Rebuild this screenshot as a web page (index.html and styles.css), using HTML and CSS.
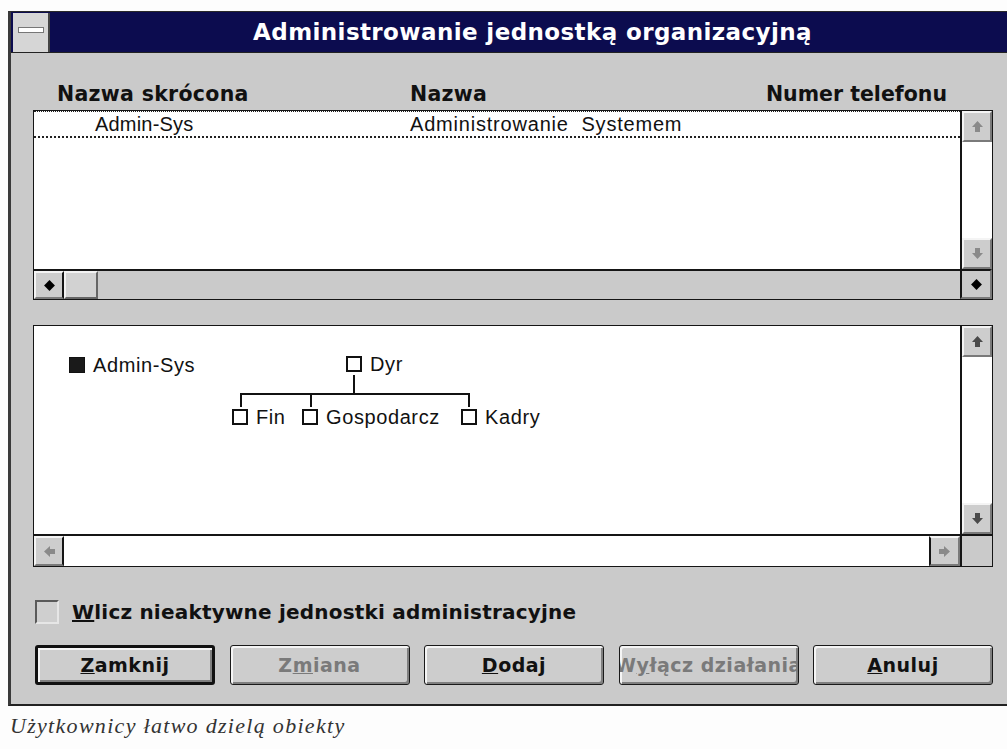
FILE: index.html
```html
<!DOCTYPE html>
<html lang="pl">
<head>
<meta charset="utf-8">
<title>Administrowanie jednostką organizacyjną</title>
<link rel="stylesheet" href="styles.css">
</head>
<body>
<div class="window">
  <div class="titlebar">
    <div class="sysmenu"><span class="sysbar"></span></div>
    <div class="title">Administrowanie jednostką organizacyjną</div>
  </div>
  <div class="client">
    <div class="headers">
      <span class="h-short">Nazwa skrócona</span>
      <span class="h-name">Nazwa</span>
      <span class="h-phone">Numer telefonu</span>
    </div>

    <div class="box box-list">
      <div class="pane">
        <div class="row focused">
          <span class="c-short">Admin-Sys</span>
          <span class="c-name">Administrowanie&nbsp; Systemem</span>
        </div>
      </div>
      <div class="vscroll">
        <div class="sbtn"><svg viewBox="0 0 13 13"><polygon points="6.5,1 12,7 9,7 9,12 4,12 4,7 1,7" class="arr-off"/></svg></div>
        <div class="track"></div>
        <div class="sbtn"><svg viewBox="0 0 13 13"><polygon points="6.5,12 12,6 9,6 9,1 4,1 4,6 1,6" class="arr-off"/></svg></div>
      </div>
      <div class="hscroll grey">
        <div class="sbtn wide"><svg viewBox="0 0 12 12"><polygon points="6,1 11,6 6,11 1,6" class="dia"/></svg></div>
        <div class="thumb"></div>
        <div class="track"></div>
      </div>
      <div class="corner sbtn"><svg viewBox="0 0 12 12"><polygon points="6,1 11,6 6,11 1,6" class="dia"/></svg></div>
    </div>

    <div class="box box-tree">
      <div class="pane tree">
        <div class="node root"><span class="mark full"></span>Admin-Sys</div>
        <div class="node dyr"><span class="mark"></span>Dyr</div>
        <span class="ln v dyr-stem"></span>
        <span class="ln h bus"></span>
        <span class="ln v drop d1"></span>
        <span class="ln v drop d2"></span>
        <span class="ln v drop d3"></span>
        <div class="node fin"><span class="mark"></span>Fin</div>
        <div class="node gos"><span class="mark"></span>Gospodarcz</div>
        <div class="node kad"><span class="mark"></span>Kadry</div>
      </div>
      <div class="vscroll">
        <div class="sbtn"><svg viewBox="0 0 13 13"><polygon points="6.5,1 12,7 9,7 9,12 4,12 4,7 1,7" class="arr-on"/></svg></div>
        <div class="track"></div>
        <div class="sbtn"><svg viewBox="0 0 13 13"><polygon points="6.5,12 12,6 9,6 9,1 4,1 4,6 1,6" class="arr-on"/></svg></div>
      </div>
      <div class="hscroll">
        <div class="sbtn wide"><svg viewBox="0 0 13 13"><polygon points="1,6.5 7,1 7,4 12,4 12,9 7,9 7,12" class="arr-off"/></svg></div>
        <div class="track"></div>
        <div class="sbtn"><svg viewBox="0 0 13 13"><polygon points="12,6.5 6,1 6,4 1,4 1,9 6,9 6,12" class="arr-off"/></svg></div>
      </div>
      <div class="corner"></div>
    </div>

    <label class="check">
      <span class="cbox"></span>
      <span class="clabel"><u>W</u>licz nieaktywne jednostki administracyjne</span>
    </label>

    <div class="buttons">
      <div class="btn default"><span><u>Z</u>amknij</span></div>
      <div class="btn off"><span>Z<u>m</u>iana</span></div>
      <div class="btn"><span><u>D</u>odaj</span></div>
      <div class="btn off"><span>W<u>y</u>łącz działania</span></div>
      <div class="btn"><span><u>A</u>nuluj</span></div>
    </div>
  </div>
</div>
<p class="caption">Użytkownicy łatwo dzielą obiekty</p>
</body>
</html>
```
FILE: styles.css
```css
html, body {
  margin: 0;
  padding: 0;
  background: #fdfdfd;
  overflow: hidden;
}

body {
  width: 1007px;
  height: 749px;
  font-family: "Liberation Sans", Arial, sans-serif;
}

/* ---------- window frame ---------- */
.window {
  margin: 11px 0 0 8px;
  width: 1010px;
  border-left: 3px solid #3a3a3a;
  border-top: 1px solid #2a2a2a;
  border-bottom: 2px solid #222;
  background: #cacaca;
}

.titlebar {
  height: 40px;
  display: flex;
  align-items: stretch;
  background: #0c0c4f;
  border-bottom: 1px solid #222;
}

.sysmenu {
  width: 35px;
  margin: 1px 0 0 2px;
  background: #d6d6d6;
  border-right: 2px solid #444;
  display: flex;
  align-items: center;
  justify-content: center;
}

.sysbar {
  width: 24px;
  height: 4px;
  background: #fff;
  border: 1px solid #777;
  margin-top: -6px;
}

.title {
  flex: 1;
  text-align: center;
  color: #fff;
  font-family: "DejaVu Sans", sans-serif;
  font-weight: bold;
  font-size: 23px;
  line-height: 40px;
  letter-spacing: 0.4px;
  padding-right: 6px;
}

/* ---------- client area ---------- */
.client {
  padding: 0 0 19px 22px;
}

.headers {
  width: 960px;
  height: 57px;
  display: grid;
  grid-template-columns: 377px 1fr auto;
  align-items: end;
  box-sizing: border-box;
  padding: 0 46px 4px 0;
  font-family: "DejaVu Sans", sans-serif;
  font-weight: bold;
  font-size: 20.5px;
  letter-spacing: 0.3px;
  color: #111;
}

.h-short { padding-left: 24px; }
.h-phone { letter-spacing: 0; }

/* ---------- list boxes ---------- */
.box {
  width: 960px;
  box-sizing: border-box;
  border: 1px solid #151515;
  background: #fff;
  display: grid;
  grid-template-columns: 1fr 32px;
}

.box-list {
  height: 190px;
  grid-template-rows: 1fr 30px;
}

.box-tree {
  margin-top: 25px;
  height: 242px;
  grid-template-rows: 1fr 32px;
}

.pane {
  position: relative;
  overflow: hidden;
}

.row {
  height: 24px;
  display: grid;
  grid-template-columns: 376px 1fr;
  align-items: center;
  font-size: 20px;
  color: #111;
}

.row.focused {
  border-top: 1px dotted #222;
  border-bottom: 2px dotted #222;
}

.c-short { padding-left: 61px; letter-spacing: 0.2px; }
.c-name { letter-spacing: 0.8px; }

/* ---------- scroll bars ---------- */
.vscroll {
  display: flex;
  flex-direction: column;
  border-left: 2px solid #151515;
}

.vscroll .track { flex: 1; background: #fff; }

.hscroll {
  display: flex;
  border-top: 2px solid #151515;
  background: #fff;
}

.hscroll.grey { background: #cacaca; }
.hscroll .track { flex: 1; }

.sbtn {
  width: 31px;
  height: 31px;
  box-sizing: border-box;
  background: #cdcdcd;
  border-top: 2px solid #f4f4f4;
  border-left: 2px solid #f4f4f4;
  border-right: 2px solid #7a7a7a;
  border-bottom: 2px solid #7a7a7a;
  display: flex;
  align-items: center;
  justify-content: center;
}

.vscroll .sbtn { width: 30px; }
.hscroll .sbtn { height: 28px; }
.box-tree .hscroll .sbtn { height: 30px; border-left: 2px solid #151515; }
.box-tree .hscroll .sbtn.wide { border-left-color: #f4f4f4; border-right: 2px solid #151515; }
.hscroll .sbtn.wide { width: 30px; border-right: 2px solid #151515; }

.thumb {
  width: 34px;
  box-sizing: border-box;
  background: #d2d2d2;
  border-top: 2px solid #f2f2f2;
  border-left: 2px solid #f2f2f2;
  border-right: 2px solid #666;
  border-bottom: 2px solid #666;
}

.sbtn svg { width: 13px; height: 13px; }

.arr-off { fill: #8a8a8a; }
.arr-on { fill: #4a4a4a; }
.dia { fill: #000; }

.corner {
  border-left: 2px solid #151515;
  border-top: 2px solid #151515;
  background: #cacaca;
}

.corner.sbtn {
  width: auto;
  height: auto;
  border-top: 2px solid #151515;
  border-left: 2px solid #151515;
}

/* ---------- organisation tree ---------- */
.tree {
  font-size: 20px;
  color: #111;
}

.node {
  position: absolute;
  display: flex;
  align-items: center;
  gap: 8px;
  line-height: 22px;
  letter-spacing: 0.6px;
  white-space: nowrap;
}

.mark {
  width: 12px;
  height: 12px;
  border: 2px solid #111;
  background: #fff;
}

.mark.full { width: 14px; height: 14px; border: 1px solid #111; background: #1a1a1a; }

.root { left: 35px; top: 28px; }
.dyr  { left: 312px; top: 27px; }
.fin  { left: 198px; top: 80px; }
.gos  { left: 268px; top: 80px; }
.kad  { left: 427px; top: 80px; }

.ln { position: absolute; background: #111; }
.ln.v { width: 2px; }
.ln.h { height: 2px; }

.dyr-stem { left: 319px; top: 49px; height: 19px; }
.bus { left: 206px; top: 67px; width: 230px; }
.drop { top: 67px; height: 14px; }
.d1 { left: 206px; }
.d2 { left: 276px; }
.d3 { left: 434px; }

/* ---------- check box ---------- */
.check {
  display: flex;
  align-items: center;
  gap: 13px;
  margin: 31px 0 0 2px;
  height: 27px;
}

.cbox {
  width: 24px;
  height: 24px;
  box-sizing: border-box;
  border-top: 2px solid #5a5a5a;
  border-left: 2px solid #5a5a5a;
  border-right: 2px solid #e6e6e6;
  border-bottom: 2px solid #e6e6e6;
  background: #cfcfcf;
}

.clabel {
  font-family: "DejaVu Sans", sans-serif;
  font-weight: bold;
  font-size: 20px;
  letter-spacing: 0.2px;
  color: #111;
}

/* ---------- push buttons ---------- */
.buttons {
  width: 960px;
  margin-top: 20px;
  display: flex;
  justify-content: space-between;
  padding-left: 2px;
  box-sizing: border-box;
}

.btn {
  width: 180px;
  height: 40px;
  box-sizing: border-box;
  border: 1px solid #1a1a1a;
  border-radius: 3px;
  background: #cdcdcd;
  box-shadow: inset 2px 2px #f5f5f5, inset -2px -2px #7f7f7f;
  display: flex;
  align-items: center;
  justify-content: center;
  overflow: hidden;
  font-family: "DejaVu Sans", sans-serif;
  font-weight: bold;
  font-size: 19px;
  letter-spacing: 0.5px;
  color: #111;
  white-space: nowrap;
}

.btn.default { border: 3px solid #111; }
.btn.off { color: #7a7a7a; }
.btn span { flex: none; }

/* ---------- caption under the window ---------- */
.caption {
  margin: 7px 0 0 10px;
  font-family: "Liberation Serif", "Times New Roman", serif;
  font-style: italic;
  font-size: 22px;
  letter-spacing: 1.3px;
  color: #333;
}
```
